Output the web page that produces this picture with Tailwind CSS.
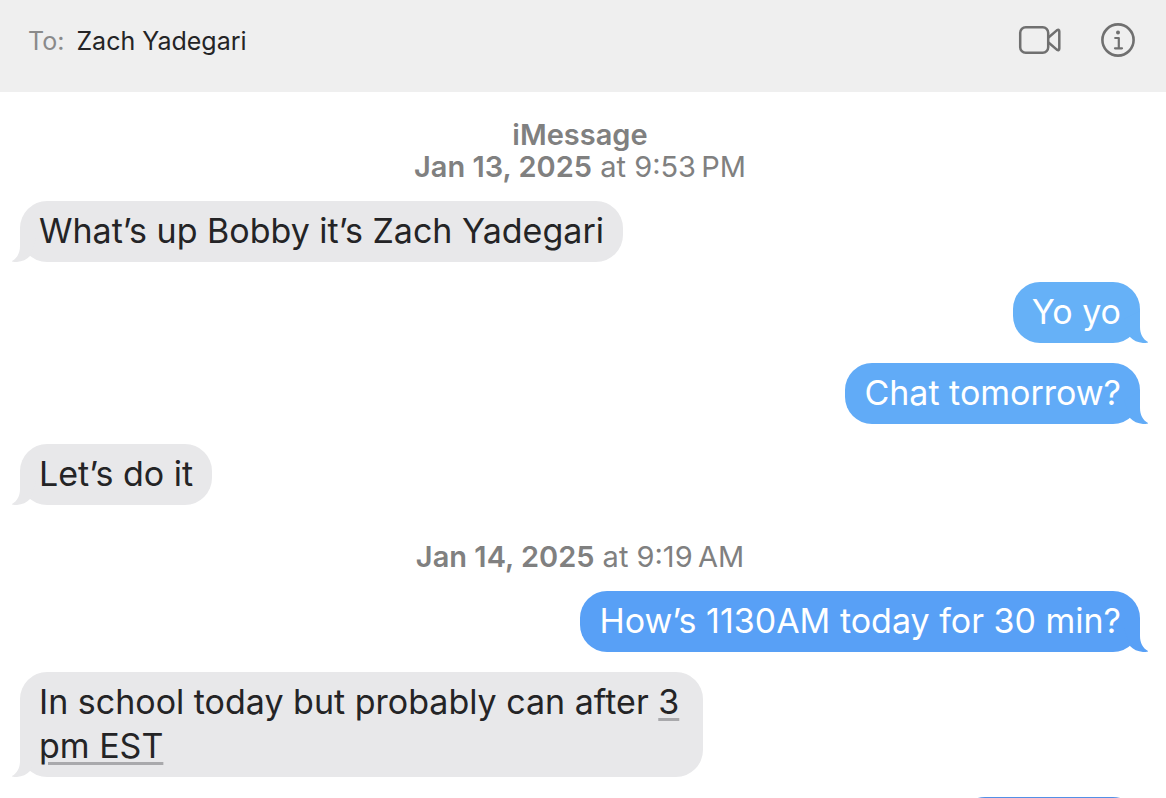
<!doctype html>
<html lang="en">
	<head>
		<meta charset="UTF-8" />
		<meta name="viewport" content="width=device-width, initial-scale=1.0" />
		<title>Messages</title>
		<script src="https://cdn.jsdelivr.net/npm/@tailwindcss/browser@4"></script>
	</head>
	<body class="flex h-screen flex-col overflow-hidden bg-white font-['Inter','Liberation_Sans',sans-serif] text-[#242426]">
		<!-- one tail shape, mirrored for sent messages -->
		<svg class="hidden">
			<symbol id="tail" viewBox="0 0 24 32">
				<path d="M8 0V16C8 23 5 28.500 -0.500 31.300C1 32 3 32 5 32C10 31.500 15 29.500 18 26L24 8Z" fill="currentColor" />
			</symbol>
		</svg>

		<header class="flex shrink-0 items-start justify-between bg-[#efefef] pt-5 pr-[30px] pb-7 pl-7">
			<div class="flex h-11 items-center gap-3 text-[25px]">
				<span class="text-[#8a8a8a]">To:</span>
				<h1>Zach Yadegari</h1>
			</div>
			<div class="flex h-10 items-center gap-[38px] text-[#707070]">
				<button type="button" aria-label="Video call">
					<svg class="h-9 w-11" viewBox="0 0 44 36" fill="none" stroke="currentColor" stroke-width="2.500" stroke-linejoin="round">
						<rect x="2.200" y="5.200" width="28" height="25.600" rx="5.500" />
						<path d="M30.500 15.500L38.800 8.400Q41.300 6.900 41.300 9.500V26.500Q41.300 29.100 38.800 27.600L30.500 20.500" />
					</svg>
				</button>
				<button type="button" aria-label="Details">
					<svg class="size-9" viewBox="0 0 36 36" fill="none" stroke="currentColor" stroke-width="2.600" stroke-linecap="round" stroke-linejoin="round">
						<circle cx="18" cy="18" r="15.600" />
						<circle cx="18" cy="10.500" r="2" fill="currentColor" stroke="none" />
						<path d="M15.200 16H18.800V26.200M15 26.300H22" stroke-width="2.200" />
					</svg>
				</button>
			</div>
		</header>

		<main class="flex flex-col gap-5 pt-[27px] pr-[26px] pl-5 text-[34px] leading-11">
			<div class="-mb-0.5 text-center text-[29px] leading-8 text-[#808080]">
				<p class="font-semibold">iMessage</p>
				<p><time><b class="font-semibold">Jan 13, 2025</b> at 9:53&#8201;PM</time></p>
			</div>

			<div class="relative max-w-[61%] self-start rounded-[27px] bg-[#e8e8ea] px-[19px] pt-2 pb-[9px]">
				What’s up Bobby it’s Zach Yadegari
				<svg class="absolute bottom-0 -left-2 h-8 w-6 overflow-visible text-[#e8e8ea]"><use href="#tail" /></svg>
			</div>

			<div class="relative max-w-[61%] self-end rounded-[27px] bg-[#66b1f7] px-[19px] pt-2 pb-[9px] text-white">
				Yo yo
				<svg class="absolute -right-2 bottom-0 h-8 w-6 -scale-x-100 text-[#66b1f7]"><use href="#tail" /></svg>
			</div>

			<div class="relative max-w-[61%] self-end rounded-[27px] bg-[#61abf7] px-[19px] pt-2 pb-[9px] text-white">
				Chat tomorrow?
				<svg class="absolute -right-2 bottom-0 h-8 w-6 -scale-x-100 text-[#61abf7]"><use href="#tail" /></svg>
			</div>

			<div class="relative max-w-[61%] self-start rounded-[27px] bg-[#e8e8ea] px-[19px] pt-2 pb-[9px]">
				Let’s do it
				<svg class="absolute bottom-0 -left-2 h-8 w-6 text-[#e8e8ea]"><use href="#tail" /></svg>
			</div>

			<div class="mt-4 -mb-0.5 text-center text-[29px] leading-8 text-[#808080]">
				<p><time><b class="font-semibold">Jan 14, 2025</b> at 9:19&#8201;AM</time></p>
			</div>

			<div class="relative max-w-[61%] self-end rounded-[27px] bg-[#58a0f6] px-[19px] pt-2 pb-[9px] text-white">
				How’s 1130AM today for 30 min?
				<svg class="absolute -right-2 bottom-0 h-8 w-6 -scale-x-100 text-[#58a0f6]"><use href="#tail" /></svg>
			</div>

			<div class="relative max-w-[61%] self-start rounded-[27px] bg-[#e8e8ea] px-[19px] pt-2 pb-[9px]">
				In school today but probably can after
				<a href="#" class="underline decoration-[#a9a9ac] decoration-3 underline-offset-4">3 pm EST</a>
				<svg class="absolute bottom-0 -left-2 h-8 w-6 text-[#e8e8ea]"><use href="#tail" /></svg>
			</div>

			<div class="h-[61px] w-[182px] shrink-0 self-end rounded-[27px] bg-[#5490e6]"></div>
		</main>
	</body>
</html>
